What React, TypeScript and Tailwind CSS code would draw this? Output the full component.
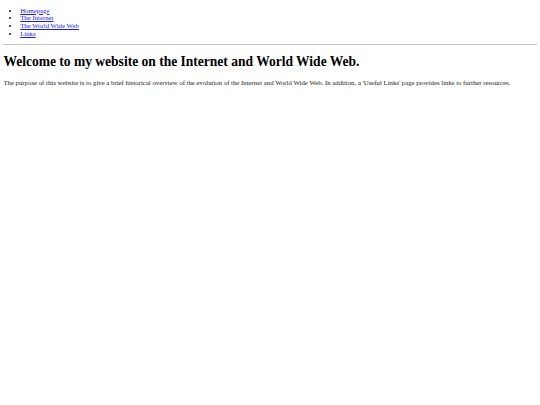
import React from 'react';

const links = ['Homepage', 'The Internet', 'The World Wide Web', 'Links'];

export default function App() {
  return (
    <div className="min-h-[405px] bg-white px-[3.4px] pt-[6.7px] text-[#1a1a1a] font-['Liberation_Serif',serif] text-[6.77px] leading-[1.15]">
      <ul className="list-disc pl-[16.8px]">
        {links.map((l) => (
          <li key={l}>
            <a href="#" className="text-[#1a1aee] underline">
              {l}
            </a>
          </li>
        ))}
      </ul>
      <hr className="mt-[6.7px] border-0 h-px bg-[#c4c4c4]" />
      <h1 className="mt-[9px] text-[13.52px] font-bold leading-[1.15] text-black">
        Welcome to my website on the Internet and World Wide Web.
      </h1>
      <p className="mt-[9px]">
        The purpose of this website is to give a brief historical overview of the evolution of the Internet and World
        Wide Web. In addition, a 'Useful Links' page provides links to further resources.
      </p>
    </div>
  );
}
